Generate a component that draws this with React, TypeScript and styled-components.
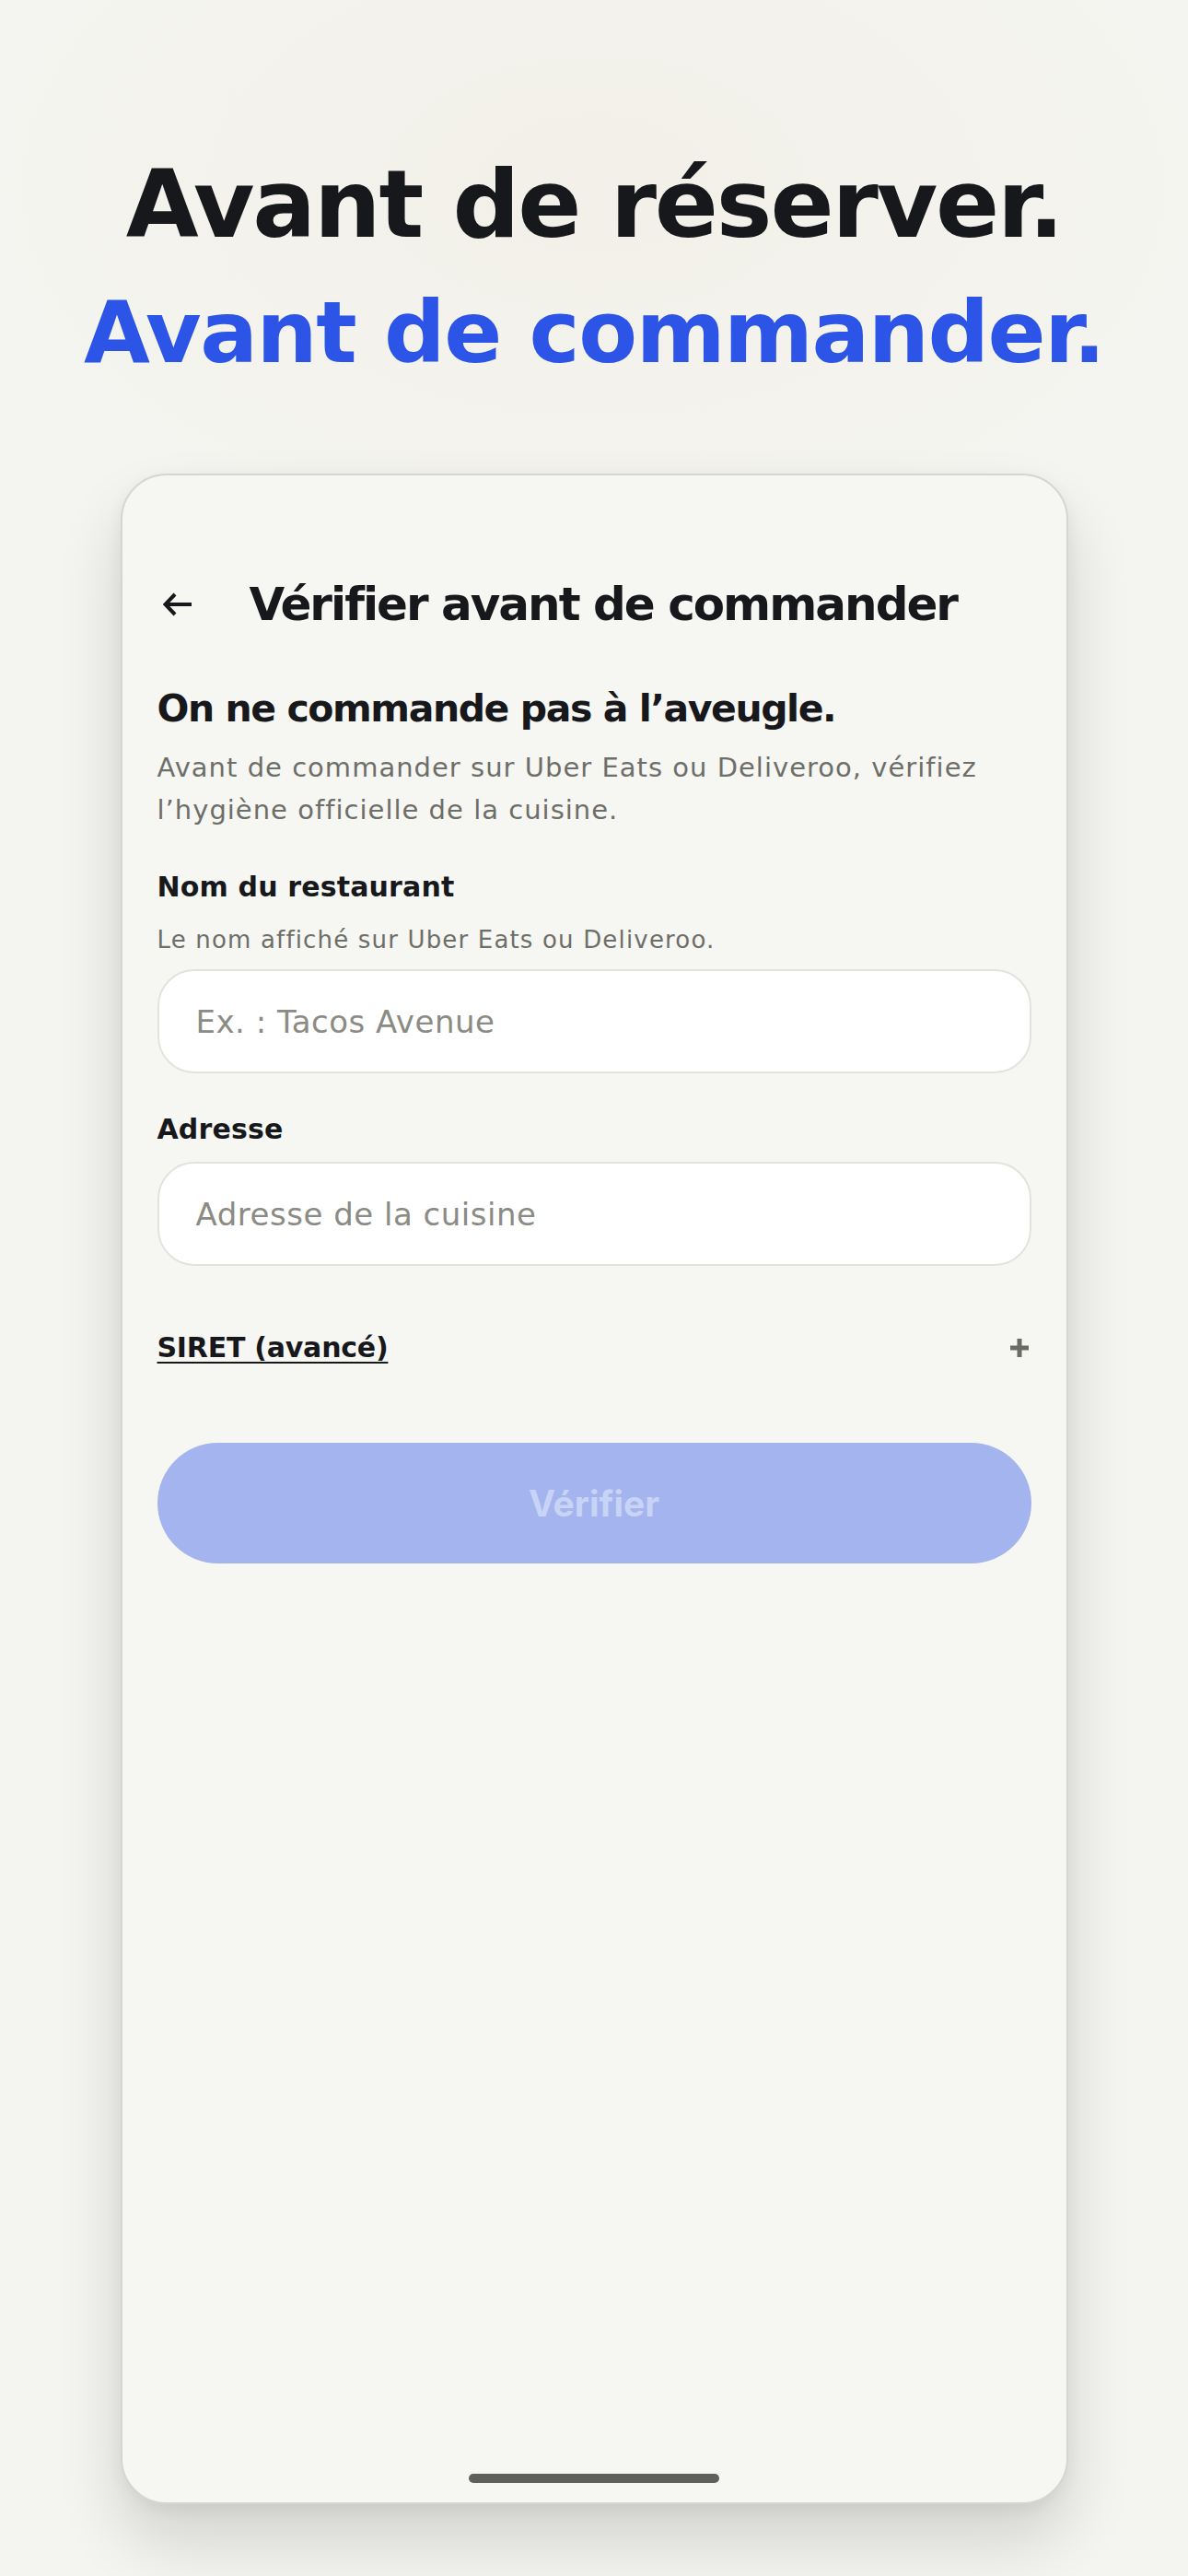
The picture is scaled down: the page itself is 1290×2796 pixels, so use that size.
import React from "react";
import styled, { createGlobalStyle } from "styled-components";

const GlobalStyle = createGlobalStyle`
  html, body {
    margin: 0;
    padding: 0;
  }
  body {
    width: 1290px;
    min-height: 2796px;
    background-color: #f4f4f0;
    background-image: radial-gradient(ellipse 700px 420px at 50% 200px, #f2f0e8 0%, rgba(242, 240, 232, 0) 100%);
    font-family: "DejaVu Sans", Inter, "Liberation Sans", sans-serif;
    -webkit-font-smoothing: antialiased;
  }
  * { box-sizing: border-box; }
`;

const Page = styled.main`
  display: flex;
  flex-direction: column;
  align-items: center;
  padding-top: 166px;
  padding-bottom: 79px;
`;

const Hero = styled.header`
  display: flex;
  flex-direction: column;
  align-items: center;
  gap: 32px;
  margin-bottom: 102px;
`;

const HeroLine = styled.h1<{ $accent?: boolean; $size: number; $track: number }>`
  margin: 0;
  font-family: "DejaVu Sans", Inter, sans-serif;
  font-weight: 700;
  font-size: ${(p) => p.$size}px;
  line-height: 1.1;
  letter-spacing: ${(p) => p.$track}em;
  color: ${(p) => (p.$accent ? "#2c54e6" : "#17181c")};
  white-space: nowrap;
`;

const Phone = styled.section`
  width: 1029px;
  height: 2204px;
  background: #f6f6f2;
  border: 2px solid #d5d5d1;
  border-radius: 50px;
  box-shadow: 0 40px 70px rgba(0, 0, 0, 0.14), 0 6px 18px rgba(0, 0, 0, 0.06);
  display: flex;
  flex-direction: column;
  padding: 110px 38px 21px 38px;
`;

const TopBar = styled.div`
  display: flex;
  align-items: center;
  gap: 56px;
  height: 60px;
`;

const BackButton = styled.button`
  width: 44px;
  height: 44px;
  display: flex;
  align-items: center;
  justify-content: center;
  padding: 0;
  background: none;
  border: none;
  color: #17181c;
`;

const ScreenTitle = styled.h2`
  margin: 0;
  font-size: 50px;
  line-height: 60px;
  font-weight: 700;
  letter-spacing: -0.04em;
  color: #17181c;
  white-space: nowrap;
`;

const Intro = styled.div`
  display: flex;
  flex-direction: column;
  margin-top: 59px;
  gap: 17px;
`;

const IntroTitle = styled.h3`
  margin: 0;
  font-size: 41px;
  line-height: 48px;
  font-weight: 700;
  letter-spacing: -0.035em;
  color: #17181c;
`;

const IntroText = styled.p`
  margin: 0;
  font-size: 29px;
  line-height: 46px;
  font-weight: 400;
  color: #6e6e69;
  letter-spacing: 0.035em;
  white-space: nowrap;
`;

const Field = styled.div<{ $top: number }>`
  display: flex;
  flex-direction: column;
  margin-top: ${(p) => p.$top}px;
`;

const Label = styled.label`
  font-size: 30px;
  line-height: 36px;
  font-weight: 700;
  color: #17181c;
  letter-spacing: 0.005em;
`;

const Hint = styled.span`
  margin-top: 24px;
  font-size: 26px;
  line-height: 30px;
  color: #6e6e69;
  letter-spacing: 0.045em;
`;

const TextInput = styled.input`
  margin-top: 17px;
  height: 113px;
  width: 100%;
  border: 2px solid #e3e3dd;
  border-radius: 40px;
  background: #ffffff;
  padding: 0 40px;
  font-family: "DejaVu Sans", Inter, sans-serif;
  font-size: 34px;
  letter-spacing: 0.015em;
  color: #17181c;
  outline: none;
  &::placeholder {
    color: #8b8b84;
  }
`;

const AdvancedRow = styled.div`
  display: flex;
  align-items: center;
  justify-content: space-between;
  margin-top: 71px;
  height: 36px;
`;

const AdvancedLink = styled.span`
  font-size: 30px;
  line-height: 36px;
  font-weight: 700;
  color: #17181c;
  text-decoration: underline;
  text-decoration-thickness: 2px;
  text-underline-offset: 5px;
  letter-spacing: -0.008em;
`;

const PlusIcon = styled.span`
  width: 22px;
  height: 22px;
  margin-right: 2px;
  display: flex;
  color: #6b6b66;
`;

const SubmitButton = styled.button`
  margin-top: 85px;
  height: 131px;
  width: 100%;
  border: none;
  border-radius: 66px;
  background: #a4b4ee;
  color: #c9d3f6;
  font-family: Inter, "DejaVu Sans", sans-serif;
  font-size: 39px;
  font-weight: 700;
  letter-spacing: 0;
`;

const HomeIndicator = styled.div`
  margin: auto auto 0 auto;
  width: 272px;
  height: 10px;
  border-radius: 5px;
  background: #5f5f5c;
`;

export default function App() {
  return (
    <>
      <GlobalStyle />
      <Page>
        <Hero>
          <HeroLine $size={102} $track={-0.021}>
            Avant de réserver.
          </HeroLine>
          <HeroLine $size={93} $track={-0.016} $accent>
            Avant de commander.
          </HeroLine>
        </Hero>
        <Phone>
          <TopBar>
            <BackButton aria-label="Retour">
              <svg width="32" height="26" viewBox="0 0 32 26" fill="none">
                <path
                  d="M31 13H3M13 2L2.5 13L13 24"
                  stroke="currentColor"
                  strokeWidth="4"
                  strokeLinecap="butt"
                  strokeLinejoin="miter"
                />
              </svg>
            </BackButton>
            <ScreenTitle>Vérifier avant de commander</ScreenTitle>
          </TopBar>
          <Intro>
            <IntroTitle>On ne commande pas à l’aveugle.</IntroTitle>
            <IntroText>
              Avant de commander sur Uber Eats ou Deliveroo, vérifiez
              <br />
              l’hygiène officielle de la cuisine.
            </IntroText>
          </Intro>
          <Field $top={43}>
            <Label>Nom du restaurant</Label>
            <Hint>Le nom affiché sur Uber Eats ou Deliveroo.</Hint>
            <TextInput placeholder="Ex. : Tacos Avenue" />
          </Field>
          <Field $top={43}>
            <Label>Adresse</Label>
            <TextInput placeholder="Adresse de la cuisine" />
          </Field>
          <AdvancedRow>
            <AdvancedLink>SIRET (avancé)</AdvancedLink>
            <PlusIcon>
              <svg width="22" height="22" viewBox="0 0 22 22">
                <path d="M11 1V21M1 11H21" stroke="currentColor" strokeWidth="5" />
              </svg>
            </PlusIcon>
          </AdvancedRow>
          <SubmitButton disabled>Vérifier</SubmitButton>
          <HomeIndicator />
        </Phone>
      </Page>
    </>
  );
}
